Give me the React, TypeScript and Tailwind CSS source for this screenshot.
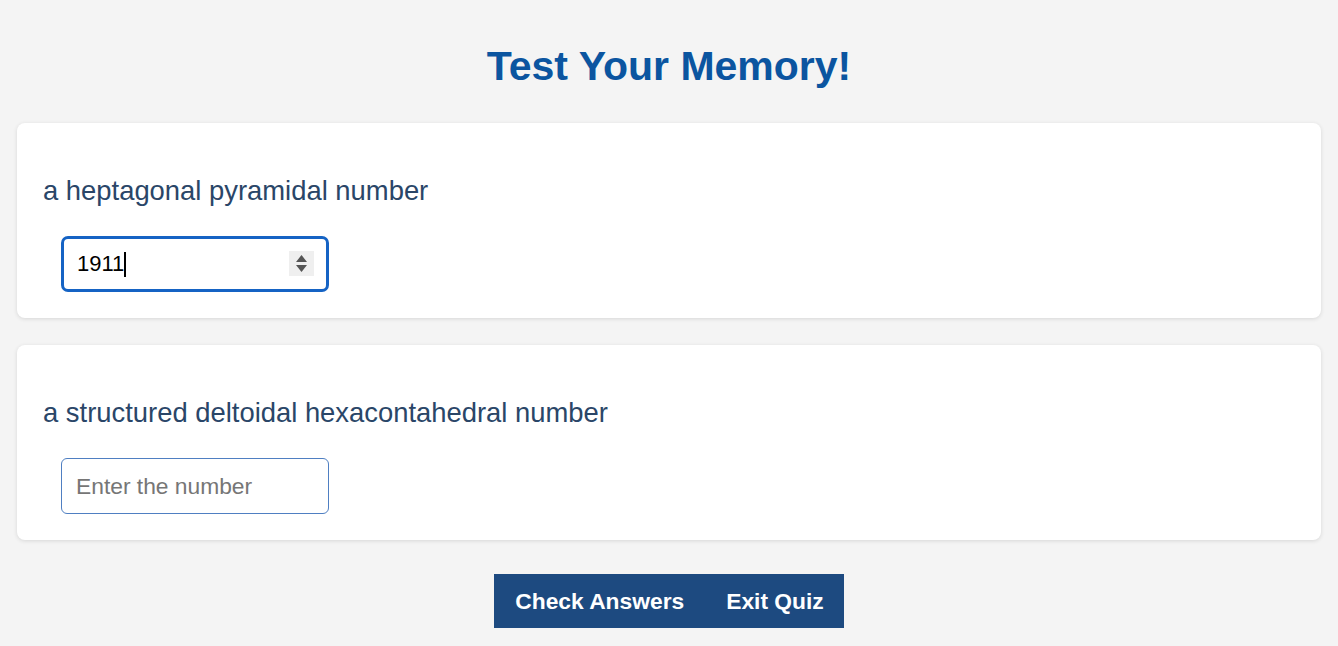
import React, { useState } from 'react';

const questions = [
  { id: 'q1', label: 'a heptagonal pyramidal number', value: '1911', focused: true },
  { id: 'q2', label: 'a structured deltoidal hexacontahedral number', value: '', focused: false },
];

export default function App() {
  const [answers, setAnswers] = useState<Record<string, string>>(
    Object.fromEntries(questions.map(q => [q.id, q.value]))
  );

  return (
    <div className="min-h-screen bg-[#f4f4f4] px-[17px] pt-[43px] pb-[18px] font-['Liberation_Sans',Arial,sans-serif]">
      <h1 className="text-center text-[41px] leading-[46px] font-bold text-[#0b55a0]">Test Your Memory!</h1>

      <div className="mt-[34px] flex flex-col gap-[27px]">
        {questions.map(q => (
          <div
            key={q.id}
            className="bg-white rounded-[8px] shadow-[0_1px_4px_rgba(0,0,0,0.12)] px-[26px] pt-[54px] pb-[26px]"
          >
            <p className="text-[27.4px] leading-[28px] text-[#2a4668]">{q.label}</p>
            <div className="relative mt-[31px] ml-[18px] w-[268px] h-[56px]">
              <input
                type="text"
                value={answers[q.id]}
                onChange={e => setAnswers({ ...answers, [q.id]: e.target.value })}
                placeholder="Enter the number"
                className={
                  q.focused
                    ? 'w-full h-full rounded-[7px] border-[3px] border-[#1563c4] bg-white pl-[13px] pr-[44px] text-[22px] text-black outline-none'
                    : 'w-full h-full rounded-[6px] border border-[#4f7fc2] bg-white pl-[14px] pr-[14px] text-[22.8px] text-black outline-none placeholder:text-[#767676]'
                }
              />
              {q.focused && (
                <>
                  <span className="absolute left-[63px] top-[16px] h-[25px] w-[1.5px] bg-black" />
                  <div className="absolute right-[15px] top-[15px] flex h-[25px] w-[25px] flex-col items-center justify-center gap-[3px] bg-[#efefef]">
                    <svg width="11" height="7" viewBox="0 0 11 7"><path d="M5.5 0L11 7H0z" fill="#555" /></svg>
                    <svg width="11" height="7" viewBox="0 0 11 7"><path d="M0 0h11L5.5 7z" fill="#555" /></svg>
                  </div>
                </>
              )}
            </div>
          </div>
        ))}
      </div>

      <div className="mt-[34px] flex justify-center">
        <div className="flex h-[54px] bg-[#1d4a80]">
          <button className="pl-[21px] pr-[21px] text-[22.8px] font-bold text-white">Check Answers</button>
          <button className="pl-[21px] pr-[20px] text-[22.8px] font-bold text-white">Exit Quiz</button>
        </div>
      </div>
    </div>
  );
}
